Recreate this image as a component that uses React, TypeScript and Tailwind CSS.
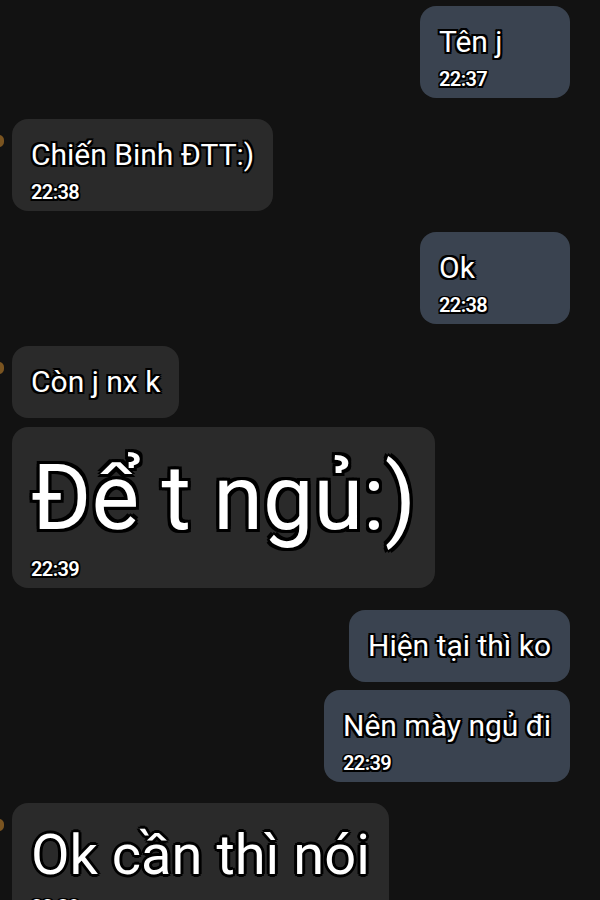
import React from "react";

type Msg = {
  text: string;
  time?: string;
  mine?: boolean;
  size?: "md" | "lg" | "xl";
  avatar?: boolean;
  gap: string;
};

const messages: Msg[] = [
  { text: "Tên j", time: "22:37", mine: true, gap: "mt-0" },
  { text: "Chiến Binh ĐTT:)", time: "22:38", avatar: true, gap: "mt-[21px]" },
  { text: "Ok", time: "22:38", mine: true, gap: "mt-[21px]" },
  { text: "Còn j nx k", avatar: true, gap: "mt-[22px]" },
  { text: "Để t ngủ:)", time: "22:39", size: "xl", gap: "mt-[9px]" },
  { text: "Hiện tại thì ko", mine: true, gap: "mt-[22px]" },
  { text: "Nên mày ngủ đi", time: "22:39", mine: true, gap: "mt-[8px]" },
  { text: "Ok cần thì nói", time: "22:39", size: "lg", avatar: true, gap: "mt-[21px]" },
];

function Bubble({ m }: { m: Msg }) {
  const textCls =
    m.size === "xl"
      ? "text-[90px] leading-[100px] [text-shadow:-3px_-3px_0_#000,3px_-3px_0_#000,-3px_3px_0_#000,3px_3px_0_#000,0_3px_0_#000,0_-3px_0_#000,3px_0_0_#000,-3px_0_0_#000]"
      : m.size === "lg"
        ? "text-[56px] leading-[64px] [text-shadow:-2px_-2px_0_#000,2px_-2px_0_#000,-2px_2px_0_#000,2px_2px_0_#000,0_3px_0_#000,0_-3px_0_#000,3px_0_0_#000,-3px_0_0_#000]"
        : "text-[30px] leading-[34px] [text-shadow:-2px_-2px_0_#000,2px_-2px_0_#000,-2px_2px_0_#000,2px_2px_0_#000,0_2px_0_#000,0_-2px_0_#000,2px_0_0_#000,-2px_0_0_#000]";

  const pad =
    m.size === "xl"
      ? "pt-[22px] pb-[7px]"
      : m.size === "lg"
        ? "pt-[20px] pb-[8px]"
        : m.time
          ? "pt-[19px] pb-[7px]"
          : "pt-[19px] pb-[19px]";

  return (
    <div
      className={`rounded-2xl pl-[19px] pr-[19px] ${pad} ${
        m.mine ? "min-w-[150px] bg-[#3a4350]" : "bg-[#2a2a2a]"
      }`}
    >
      <div className={`text-white ${textCls}`}>{m.text}</div>
      {m.time && (
        <div className="mt-[8px] text-[20px] leading-[24px] font-semibold tracking-[-0.6px] text-white [text-shadow:-1.5px_-1.5px_0_#000,1.5px_-1.5px_0_#000,-1.5px_1.5px_0_#000,1.5px_1.5px_0_#000,0_1.5px_0_#000,0_-1.5px_0_#000,1.5px_0_0_#000,-1.5px_0_0_#000]">
          {m.time}
        </div>
      )}
    </div>
  );
}

export default function App() {
  return (
    <div className="h-[900px] w-[600px] overflow-hidden bg-[#121212] pt-[6px] font-['Roboto',sans-serif]">
      <div className="flex flex-col">
        {messages.map((m, i) => (
          <div
            key={i}
            className={`relative flex ${m.gap} ${m.mine ? "justify-end pr-[30px]" : "justify-start pl-[12px]"}`}
          >
            {m.avatar && (
              <div className="absolute left-[-6px] top-[16px] h-[12px] w-[10px] rounded-full bg-[#7a5420]" />
            )}
            <Bubble m={m} />
          </div>
        ))}
      </div>
    </div>
  );
}
